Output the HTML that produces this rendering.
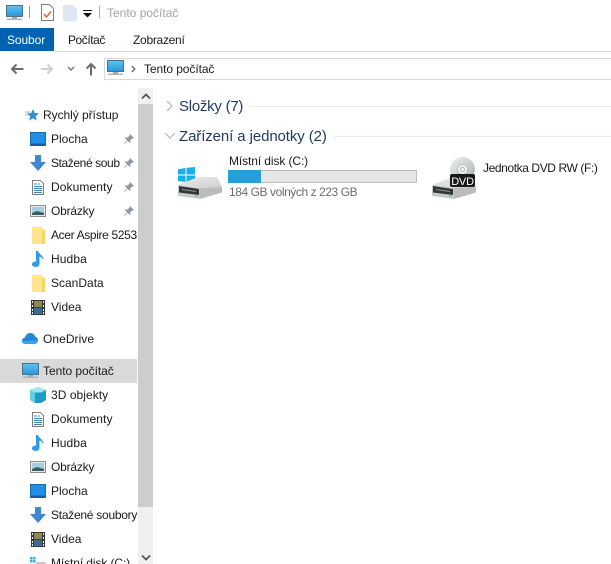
<!DOCTYPE html>
<html lang="cs"><head><meta charset="utf-8"><title>Tento počítač</title>
<style>
html,body{margin:0;padding:0;background:#fff}
#p{position:relative;width:611px;height:564px;overflow:hidden;background:#fff;font-family:"Liberation Sans",sans-serif;font-size:12px;color:#1a1a1a}
#p>*{position:absolute}
.t{white-space:nowrap;line-height:16px;height:16px}
svg{display:block;overflow:visible}
.h{font-size:15px;color:#1e3a5f;line-height:20px;height:20px;white-space:nowrap}
</style></head><body><div id="p">
<svg width="0" height="0" style="position:absolute">
<defs>
<linearGradient id="sc" x1="0" y1="0" x2="0" y2="1"><stop offset="0" stop-color="#5cc4f2"/><stop offset="1" stop-color="#2a97dc"/></linearGradient>
<linearGradient id="dk" x1="0" y1="0" x2="1" y2="1"><stop offset="0" stop-color="#ececec"/><stop offset="1" stop-color="#cfcfcf"/></linearGradient>
<linearGradient id="cd" x1="0" y1="0" x2="1" y2="1"><stop offset="0" stop-color="#eef3ee"/><stop offset="1" stop-color="#a6b1aa"/></linearGradient>
<symbol id="pc" viewBox="0 0 17 16"><rect x="0.5" y="0.5" width="16" height="11" fill="url(#sc)" stroke="#4d6f88"/><rect x="6" y="12" width="5" height="1.500" fill="#9aa8b2"/><rect x="1" y="13.500" width="15" height="1.500" fill="#a8b4bc"/></symbol>
<symbol id="desk" viewBox="0 0 16 14"><rect x=".5" y=".5" width="15" height="13" fill="#1e90ea" stroke="#1669ab"/><rect x="1" y="11.500" width="14" height="2" fill="#0e5fa6"/></symbol>
<symbol id="down" viewBox="0 0 16 16"><path d="M5 0h6v7h5l-8 9-8-9h5z" fill="#3f87cf"/></symbol>
<symbol id="doc" viewBox="0 0 12 15"><path d="M.5.5h8l3 3v11H.5z" fill="#fff" stroke="#7f7f7f"/><path d="M2 4h3M6 4h2M2 6.500h8M2 8.500h8M2 10.500h8M2 12.500h8" stroke="#3f86b8" fill="none"/></symbol>
<symbol id="pic" viewBox="0 0 16 12"><rect x=".5" y=".5" width="15" height="11" fill="#e9e9e9" stroke="#8e8e8e"/><rect x="2" y="2" width="12" height="8" fill="#a8cde3"/><path d="M2 8l5-2 7 2v2H2z" fill="#3c5a62"/></symbol>
<symbol id="fold" viewBox="0 0 13 17"><path d="M0 0h10l1 2.500 2 .5v14H0z" fill="#fde68f"/><rect x="10" y="3" width="3" height="14" fill="#f5d468"/></symbol>
<symbol id="mus" viewBox="0 0 12 16"><path d="M4 0h2c.5 3 5.500 4 5.500 9.500-1-2.500-2.500-3.500-4-4V13c0 1.800-1.800 3-3.800 3S0 15 0 13.300 1.700 10.500 3.500 10.500c.2 0 .4 0 .5.100z" fill="#2f9de3"/></symbol>
<symbol id="vid" viewBox="0 0 14 15"><rect width="14" height="15" fill="#33393e"/><rect x="3" y="1" width="8" height="6" fill="#8f8a4a"/><rect x="3" y="8" width="8" height="6" fill="#3f6b90"/><path d="M1 1h1v2H1zM1 5h1v2H1zM1 9h1v2H1zM1 12h1v2H1zM12 1h1v2h-1zM12 5h1v2h-1zM12 9h1v2h-1zM12 12h1v2h-1z" fill="#e4e4e4"/></symbol>
<symbol id="pin" viewBox="0 0 10 10"><path d="M6 0l4 4-1 .6-.6-.3L6.300 6.400 6.500 8l-.9.9L3.500 6.800 .6 9.800 0 9.200l3-3L1 4.200 1.800 3.400l1.600.2L5.700 1.500l-.3-.6z" fill="#8f989f"/></symbol>
<symbol id="drive" viewBox="0 0 44 22"><path d="M20 0H39L44 10 22 11 0 8z" fill="url(#dk)"/><path d="M44 10V15.500L22 22V11z" fill="#bcbcbc"/><path d="M0 8L22 11V22L0 19z" fill="#c8caca"/><path d="M1 9L21 12V18L1 15.500z" fill="#33373a"/><path d="M4 12.500l14 2" stroke="#8e9494" fill="none"/><rect x="17" y="18.500" width="3" height="1.500" fill="#6fcb6f"/></symbol>
</defs></svg>

<!-- title bar -->
<svg style="left:6px;top:5px" width="17" height="16"><use href="#pc" width="17" height="16"/></svg>
<div style="left:29px;top:6px;width:1px;height:12px;background:#9a9a9a"></div>
<svg style="left:41px;top:4px" width="13" height="17"><path d="M.5.500h8l4 4v12H.500z" fill="#fff" stroke="#8a7a70"/><path d="M3 10l2.500 3L10 7.500" stroke="#e0603c" stroke-width="1.400" fill="none"/></svg>
<svg style="left:63px;top:5px" width="14" height="16"><path d="M0 0h10l4 4v12H0z" fill="#dde6f2"/></svg>
<svg style="left:83px;top:10px" width="9" height="8"><rect x="0" y="0" width="9" height="1" fill="#111"/><path d="M0 3h9L4.500 7.500z" fill="#111"/></svg>
<div style="left:99px;top:6px;width:1px;height:12px;background:#a8a8a8"></div>
<div class="t" style="left:107px;top:5px;color:#a3a3a3">Tento počítač</div>

<!-- ribbon -->
<div style="left:0;top:28px;width:54px;height:23px;background:#0063b1"></div>
<div class="t" style="left:7px;top:32px;color:#fff;letter-spacing:-.1px">Soubor</div>
<div class="t" style="left:68px;top:32px;letter-spacing:-.45px">Počítač</div>
<div class="t" style="left:133px;top:32px;letter-spacing:-.28px">Zobrazení</div>
<div style="left:54px;top:51px;width:557px;height:1px;background:#dadbdc"></div>

<!-- nav -->
<svg style="left:10px;top:63px" width="14" height="12"><path d="M13.500 6H2M6.500 1.500L2 6l4.500 4.500" stroke="#6d6d6d" stroke-width="2" fill="none"/></svg>
<svg style="left:40px;top:63px" width="14" height="12"><path d="M1 6h11M7.500 1.500L12 6l-4.500 4.500" stroke="#cfcfcf" stroke-width="2" fill="none"/></svg>
<svg style="left:67px;top:66px" width="8" height="6"><path d="M1 1l3 3 3-3" stroke="#7a7a7a" stroke-width="1.500" fill="none"/></svg>
<svg style="left:85px;top:62px" width="12" height="14"><path d="M6 13.500V2M1.500 6.500L6 2l4.500 4.500" stroke="#6d6d6d" stroke-width="2" fill="none"/></svg>
<div style="left:104px;top:58px;width:507px;height:22px;border:1px solid #d9d9d9;border-right:0;box-sizing:border-box"></div>
<svg style="left:107px;top:60px" width="17" height="16"><use href="#pc" width="17" height="16"/></svg>
<svg style="left:131px;top:65px" width="5" height="8"><path d="M.8 1l3 3-3 3" stroke="#666" stroke-width="1.300" fill="none"/></svg>
<div class="t" style="left:144px;top:61px;letter-spacing:-.08px">Tento počítač</div>

<!-- scrollbar -->
<div style="left:138px;top:88px;width:15px;height:476px;background:#f0f0f0"></div>
<div style="left:138px;top:104px;width:15px;height:403px;background:#cdcdcd"></div>
<svg style="left:141px;top:93px" width="10" height="7"><path d="M1 5.500l4-4 4 4" stroke="#505050" stroke-width="1.700" fill="none"/></svg>
<svg style="left:141px;top:554px" width="10" height="7"><path d="M1 1.500l4 4 4-4" stroke="#505050" stroke-width="1.700" fill="none"/></svg>

<!-- selection -->
<div style="left:0;top:359px;width:137px;height:24px;background:#d9d9d9"></div>

<!-- sidebar -->
<svg style="left:25px;top:108px" width="14" height="14"><path d="M8 1l1.700 4L14 5.400l-3.300 2.800 1 4.300L8 10.200 4.200 12.500l1-4.300L2 5.400l4.300-.4z" fill="#2f8fd6"/><path d="M0 4h5M0 7h3" stroke="#7dc0ea" fill="none"/></svg>
<div class="t" style="left:43px;top:107px;letter-spacing:-.05px">Rychlý přístup</div>
<svg style="left:30px;top:132px" width="16" height="14"><use href="#desk" width="16" height="14"/></svg>
<div class="t" style="left:51px;top:131px">Plocha</div>
<svg style="left:124px;top:134px" width="10" height="10"><use href="#pin" width="10" height="10"/></svg>
<svg style="left:30px;top:155px" width="16" height="16"><use href="#down" width="16" height="16"/></svg>
<div class="t" style="left:51px;top:155px;letter-spacing:-.4px">Stažené soub</div>
<svg style="left:124px;top:158px" width="10" height="10"><use href="#pin" width="10" height="10"/></svg>
<svg style="left:32px;top:180px" width="12" height="15"><use href="#doc" width="12" height="15"/></svg>
<div class="t" style="left:51px;top:179px;letter-spacing:.1px">Dokumenty</div>
<svg style="left:124px;top:182px" width="10" height="10"><use href="#pin" width="10" height="10"/></svg>
<svg style="left:30px;top:205px" width="16" height="12"><use href="#pic" width="16" height="12"/></svg>
<div class="t" style="left:51px;top:203px;letter-spacing:-.2px">Obrázky</div>
<svg style="left:124px;top:206px" width="10" height="10"><use href="#pin" width="10" height="10"/></svg>
<svg style="left:32px;top:227px" width="13" height="17"><use href="#fold" width="13" height="17"/></svg>
<div class="t" style="left:51px;top:227px;width:87px;overflow:hidden;letter-spacing:-.35px">Acer Aspire 5253</div>
<svg style="left:32px;top:251px" width="12" height="16"><use href="#mus" width="12" height="16"/></svg>
<div class="t" style="left:51px;top:251px;letter-spacing:.1px">Hudba</div>
<svg style="left:32px;top:275px" width="13" height="17"><use href="#fold" width="13" height="17"/></svg>
<div class="t" style="left:51px;top:275px">ScanData</div>
<svg style="left:31px;top:300px" width="14" height="15"><use href="#vid" width="14" height="15"/></svg>
<div class="t" style="left:51px;top:299px">Videa</div>
<svg style="left:22px;top:333px" width="16" height="11"><path d="M3.500 11C1.500 11 0 9.600 0 7.900 0 6.300 1.200 5 2.800 4.800 3.500 2 5.800 0 8.300 0c2.300 0 4.300 1.500 5 3.800 1.500.4 2.700 1.900 2.700 3.500C16 9.400 14.400 11 12.500 11z" fill="#1f86d8"/><path d="M3.500 11C1.500 11 0 9.600 0 7.900L7 8l9-.7C16 9.400 14.400 11 12.500 11z" fill="#35a5ec"/></svg>
<div class="t" style="left:43px;top:331px;letter-spacing:.05px">OneDrive</div>
<svg style="left:22px;top:363px" width="17" height="16"><use href="#pc" width="17" height="16"/></svg>
<div class="t" style="left:43px;top:363px;letter-spacing:-.05px">Tento počítač</div>
<svg style="left:30px;top:387px" width="16" height="16"><path d="M8 0l8 3v10l-5 3H5l-5-3V3z" fill="#1b9cc9"/><path d="M0 3l8-3 8 3-5 2.500H5z" fill="#9fe6f2"/><path d="M0 3l5 2.500V16l-5-3z" fill="#62cfe3"/></svg>
<div class="t" style="left:51px;top:387px;letter-spacing:.05px">3D objekty</div>
<svg style="left:32px;top:412px" width="12" height="15"><use href="#doc" width="12" height="15"/></svg>
<div class="t" style="left:51px;top:411px;letter-spacing:.1px">Dokumenty</div>
<svg style="left:32px;top:435px" width="12" height="16"><use href="#mus" width="12" height="16"/></svg>
<div class="t" style="left:51px;top:435px;letter-spacing:.1px">Hudba</div>
<svg style="left:30px;top:461px" width="16" height="12"><use href="#pic" width="16" height="12"/></svg>
<div class="t" style="left:51px;top:459px;letter-spacing:-.2px">Obrázky</div>
<svg style="left:30px;top:484px" width="16" height="14"><use href="#desk" width="16" height="14"/></svg>
<div class="t" style="left:51px;top:483px">Plocha</div>
<svg style="left:30px;top:507px" width="16" height="16"><use href="#down" width="16" height="16"/></svg>
<div class="t" style="left:51px;top:507px;letter-spacing:-.26px">Stažené soubory</div>
<svg style="left:31px;top:532px" width="14" height="15"><use href="#vid" width="14" height="15"/></svg>
<div class="t" style="left:51px;top:531px">Videa</div>
<svg style="left:30px;top:557px" width="16" height="7"><path d="M0 0h2.500v2.500H0zM3 0h2.500v2.500H3zM0 3h2.500v2.500H0zM3 3h2.500v2.500H3z" fill="#35b0e3"/><rect x="6" y="5" width="10" height="2" fill="#c8c8c8"/></svg>
<div class="t" style="left:51px;top:555px;letter-spacing:-.1px">Místní disk (C:)</div>

<!-- content -->
<svg style="left:166px;top:100px" width="7" height="12"><path d="M1 1l5 5-5 5" stroke="#b0b0b0" fill="none"/></svg>
<div class="h" style="left:179px;top:97px;letter-spacing:-.25px">Složky (7)</div>
<div style="left:251px;top:106px;width:360px;height:1px;background:#e5e8ee"></div>
<svg style="left:164px;top:132px" width="12" height="7"><path d="M1 1l5 5 5-5" stroke="#b0b0b0" fill="none"/></svg>
<div class="h" style="left:179px;top:127px;letter-spacing:-.1px">Zařízení a jednotky (2)</div>
<div style="left:334px;top:136px;width:277px;height:1px;background:#e5e8ee"></div>

<svg style="left:178px;top:167px" width="17" height="16"><path d="M0 2.200L7.500 1v6.500H0zM8.500.9L17 0v7.500H8.500zM0 8.500h7.500V15L0 14zM8.500 8.500H17V16l-8.500-1z" fill="#17b0e8"/></svg>
<svg style="left:178px;top:177px" width="44" height="22"><use href="#drive" width="44" height="22"/></svg>
<div class="t" style="left:229px;top:153px;letter-spacing:-.1px">Místní disk (C:)</div>
<div style="left:228px;top:170px;width:189px;height:13px;background:#e6e6e6;border:1px solid #bcbcbc;box-sizing:border-box"></div>
<div style="left:228px;top:170px;width:33px;height:13px;background:#26a0da"></div>
<div class="t" style="left:229px;top:184px;color:#6d6d6d;letter-spacing:-.43px">184 GB volných z 223 GB</div>

<svg style="left:450px;top:157px" width="25" height="25"><circle cx="12.500" cy="12.500" r="12.500" fill="url(#cd)"/><circle cx="12.500" cy="12.500" r="5" fill="#f2f4f2" stroke="#b9c3bd"/><circle cx="12.500" cy="12.500" r="2" fill="#fff" stroke="#aab3ad"/></svg>
<svg style="left:432px;top:177px" width="44" height="22"><use href="#drive" width="44" height="22"/></svg>
<svg style="left:450px;top:174px" width="25" height="13"><rect width="25" height="13" rx="2" fill="#17191a"/><text x="12.500" y="10.800" text-anchor="middle" font-family="Liberation Sans" font-size="11" letter-spacing="-.2" fill="#fff">DVD</text></svg>
<div class="t" style="left:483px;top:160px;letter-spacing:-.4px">Jednotka DVD RW (F:)</div>
</div></body></html>
